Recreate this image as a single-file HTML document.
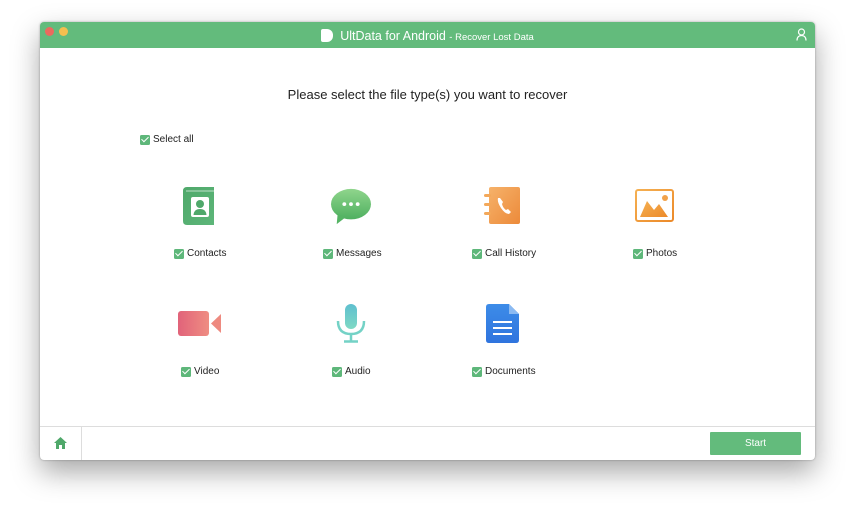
<!DOCTYPE html>
<html><head><meta charset="utf-8"><style>
*{margin:0;padding:0;box-sizing:border-box}
body{width:855px;height:516px;background:#fff;font-family:"Liberation Sans",sans-serif;position:relative;overflow:hidden}
.win{position:absolute;left:40px;top:22px;width:775px;height:438px;background:#fff;border-radius:4px;box-shadow:0 12px 28px rgba(0,0,0,.35),0 0 2px rgba(0,0,0,.3);overflow:hidden}
.tb{position:absolute;left:0;top:0;width:775px;height:26px;background:#63bb7c}
.dot{position:absolute;top:5px;width:9px;height:9px;border-radius:50%}
.title{position:absolute;left:0;right:0;top:7px;text-align:center;color:#fff;font-size:12.5px}
.title small{font-size:9.5px}
.h{position:absolute;top:65px;left:0;right:0;text-align:center;font-size:13px;color:#222}
.cb{position:absolute;font-size:10px;color:#222;display:flex;align-items:center;white-space:nowrap}
.cb i{display:inline-block;width:10px;height:10px;background:#5eb77a;border-radius:1.5px;margin-right:3px;position:relative}
.cb i:after{content:"";position:absolute;left:3px;top:0.5px;width:3px;height:6px;border:solid #fff;border-width:0 1.6px 1.6px 0;transform:rotate(45deg)}
.ic{position:absolute}
.foot{position:absolute;left:0;top:404px;width:775px;height:34px;border-top:1px solid #ddd}
.home{position:absolute;left:0;top:0;width:42px;height:34px;border-right:1px solid #ddd}
.start{position:absolute;left:670px;top:5px;width:91px;height:23px;background:#63bb7c;color:#fff;font-size:10px;text-align:center;line-height:24px;border-radius:1px}
</style></head><body>
<div class="win">
 <div class="tb">
  <div class="dot" style="left:5px;background:#ec6a5e"></div>
  <div class="dot" style="left:19px;background:#f4bf4f"></div>
  <div class="title"><span style="display:inline-block;width:12px;height:13px;background:#fff;border-radius:2px 6px 6px 2px;vertical-align:-2px;margin-right:7px"></span>UltData for Android <small>- Recover Lost Data</small></div>
  <svg style="position:absolute;left:756px;top:6px" width="11" height="13" viewBox="0 0 11 13"><circle cx="5.5" cy="4" r="3" fill="none" stroke="#fff" stroke-width="1.2"/><path d="M1 12.5C1 9 3 7.5 5.5 7.5S10 9 10 12.5" fill="none" stroke="#fff" stroke-width="1.2"/></svg>
 </div>
 <div class="h">Please select the file type(s) you want to recover</div>
 <div class="cb" style="left:100px;top:112px"><i></i>Select all</div>

 <svg class="ic" style="left:143px;top:165px" width="32" height="38" viewBox="0 0 32 38"><defs><linearGradient id="g1" x1="0" y1="0" x2="1" y2="1"><stop offset="0" stop-color="#4fa86a"/><stop offset="1" stop-color="#5db679"/></linearGradient></defs><path d="M4 0H31V38H4Q0 38 0 34V4Q0 0 4 0Z" fill="url(#g1)"/><path d="M3 4H31" stroke="#fff" stroke-width="1.2" opacity=".5"/><rect x="8" y="10" width="18" height="20" rx="2" fill="#fff"/><circle cx="17" cy="17" r="4" fill="#4fa86a"/><path d="M10.5 28Q11 22 17 22T23.5 28Z" fill="#4fa86a"/></svg>
 <div class="cb" style="left:134px;top:226px"><i></i>Contacts</div>

 <svg class="ic" style="left:289px;top:165px" width="44" height="40" viewBox="0 0 44 42"><defs><linearGradient id="g2" x1="0" y1="0" x2="0" y2="1"><stop offset="0" stop-color="#8fd58c"/><stop offset="1" stop-color="#4fb060"/></linearGradient></defs><ellipse cx="22" cy="18" rx="21" ry="16" fill="url(#g2)"/><path d="M8 28L7 39L16 32Z" fill="#55b464"/><circle cx="15" cy="18" r="2" fill="#fff"/><circle cx="22" cy="18" r="2" fill="#fff"/><circle cx="29" cy="18" r="2" fill="#fff"/></svg>
 <div class="cb" style="left:283px;top:226px"><i></i>Messages</div>

 <svg class="ic" style="left:444px;top:165px" width="37" height="38" viewBox="0 0 37 38"><defs><linearGradient id="g3" x1="0" y1="0" x2="1" y2="1"><stop offset="0" stop-color="#f6b26a"/><stop offset="1" stop-color="#ec8a3a"/></linearGradient></defs><rect x="5" y="0" width="31" height="37" rx="2" fill="url(#g3)"/><rect x="0" y="7" width="7" height="3" rx="1.5" fill="#f3a85a"/><rect x="0" y="16" width="7" height="3" rx="1.5" fill="#f3a85a"/><rect x="0" y="25" width="7" height="3" rx="1.5" fill="#f3a85a"/><path d="M14 11Q13 15 17 21T25 27L27 25L24 22L22 23Q19 21 18 17L19 15L16 11Z" fill="#fff"/></svg>
 <div class="cb" style="left:432px;top:226px"><i></i>Call History</div>

 <svg class="ic" style="left:595px;top:167px" width="39" height="33" viewBox="0 0 39 33"><defs><linearGradient id="g4" x1="0" y1="0" x2="1" y2="1"><stop offset="0" stop-color="#f5b052"/><stop offset="1" stop-color="#ec8a2a"/></linearGradient></defs><rect x="1" y="1" width="37" height="31" rx="2" fill="none" stroke="url(#g4)" stroke-width="2"/><path d="M5 28L12 12L19 21L24 15L33 28Z" fill="url(#g4)"/><circle cx="30" cy="9" r="3" fill="#f2a24a"/></svg>
 <div class="cb" style="left:593px;top:226px"><i></i>Photos</div>

 <svg class="ic" style="left:137px;top:289px" width="45" height="26" viewBox="0 0 45 26"><defs><linearGradient id="g5" x1="0" x2="1"><stop offset="0" stop-color="#e1637a"/><stop offset="1" stop-color="#ef8d82"/></linearGradient></defs><rect x="1" y="0" width="31" height="25" rx="3" fill="url(#g5)"/><path d="M34 12.5L44 3V22Z" fill="#ee8a80"/></svg>
 <div class="cb" style="left:141px;top:344px"><i></i>Video</div>

 <svg class="ic" style="left:296px;top:282px" width="30" height="39" viewBox="0 0 30 39"><defs><linearGradient id="g6" x1="0" y1="0" x2="0" y2="1"><stop offset="0" stop-color="#5ebfcf"/><stop offset="1" stop-color="#7fd9c4"/></linearGradient></defs><rect x="9" y="0" width="12" height="25" rx="6" fill="url(#g6)"/><path d="M2 17Q2 30 15 30T28 17" fill="none" stroke="#74d2c6" stroke-width="2.5"/><path d="M15 30V37M8 37.5H22" stroke="#74d2c6" stroke-width="2.5"/></svg>
 <div class="cb" style="left:292px;top:344px"><i></i>Audio</div>

 <svg class="ic" style="left:446px;top:282px" width="33" height="39" viewBox="0 0 33 39"><defs><linearGradient id="g7" x1="0" y1="0" x2="0" y2="1"><stop offset="0" stop-color="#3d8ce8"/><stop offset="1" stop-color="#2f74de"/></linearGradient></defs><path d="M3 0H23L33 10V36Q33 39 30 39H3Q0 39 0 36V3Q0 0 3 0Z" fill="url(#g7)"/><path d="M23 0V10H33Z" fill="#8bbaf2"/><path d="M7 18H26M7 24H26M7 30H26" stroke="#fff" stroke-width="2"/></svg>
 <div class="cb" style="left:432px;top:344px"><i></i>Documents</div>

 <div class="foot">
  <div class="home"><svg style="position:absolute;left:14px;top:10px" width="13" height="12" viewBox="0 0 13 12"><path d="M6.5 0L13 6H11V12H8V8H5V12H2V6H0Z" fill="#4fa86a"/></svg></div>
  <div class="start">Start</div>
 </div>
</div>
</body></html>
